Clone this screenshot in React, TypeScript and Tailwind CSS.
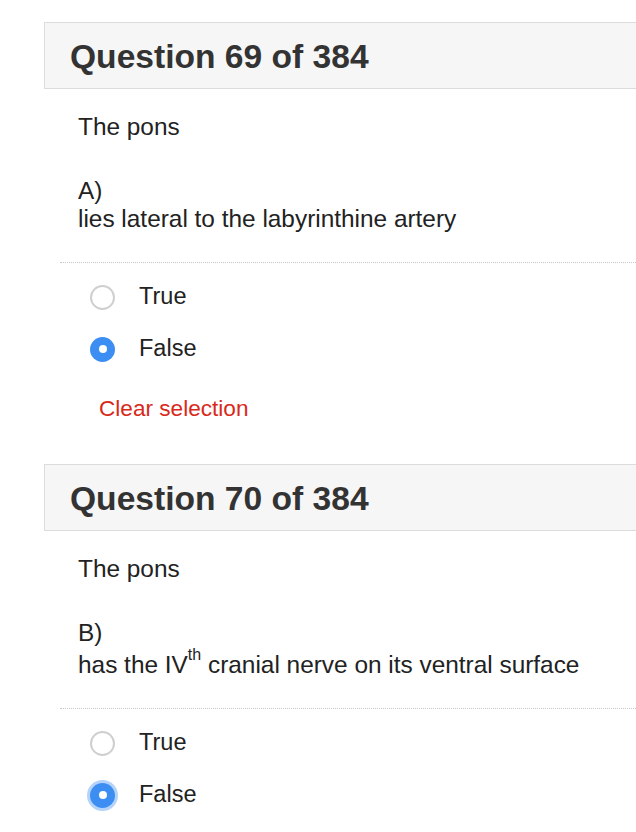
import React from 'react';

type Question = {
  number: number;
  letter: string;
  answer: React.ReactNode;
  selected: 'true' | 'false' | null;
  focused?: boolean;
  tallLine?: boolean;
};

const questions: Question[] = [
  {
    number: 69,
    letter: 'A)',
    answer: 'lies lateral to the labyrinthine artery',
    selected: 'false',
  },
  {
    number: 70,
    letter: 'B)',
    answer: (
      <>
        has the IV
        <sup className="text-[16px] top-[-0.8em]">th</sup> cranial nerve on its ventral surface
      </>
    ),
    selected: 'false',
    focused: true,
    tallLine: true,
  },
];

const Radio: React.FC<{ checked: boolean; focused?: boolean; label: string }> = ({
  checked,
  focused,
  label,
}) => (
  <label className="flex items-center h-[52px] ml-[46px]">
    {checked ? (
      <span
        className={
          'w-[25px] h-[25px] rounded-full bg-[#3d8ef2] flex items-center justify-center ' +
          (focused ? 'ring-[3px] ring-[#b5d3f8]' : '')
        }
      >
        <span className="w-[8px] h-[8px] rounded-full bg-white" />
      </span>
    ) : (
      <span className="w-[25px] h-[25px] rounded-full border-2 border-[#cfcfcf] bg-white" />
    )}
    <span className="ml-[24px] text-[23.5px] text-[#222]">{label}</span>
  </label>
);

export default function App() {
  return (
    <div className="w-[636px] h-[832px] overflow-hidden bg-white pl-[44px] pt-[22px] font-['Liberation_Sans',Arial,sans-serif]">
      {questions.map((q, i) => (
        <section key={q.number} className={i > 0 ? 'mt-[41px]' : ''}>
          {/* Header */}
          <div className="w-[620px] h-[67px] border border-[#dcdcdc] bg-[#f6f6f6] flex items-center pl-[25px] pt-[2px]">
            <h2 className="text-[33.6px] font-bold text-[#333] leading-none">
              Question {q.number} of 384
            </h2>
          </div>

          {/* Question text */}
          <div className="pl-[34px] text-[24.4px] leading-[28px] text-[#222]">
            <p className="mt-[24px]">The pons</p>
            <p className="mt-[36px]">{q.letter}</p>
            <p className={q.tallLine ? 'pt-[4px]' : ''}>{q.answer}</p>
          </div>

          <div className="ml-[16px] mt-[29px] border-t border-dotted border-[#c8c8c8]" />

          {/* Options */}
          <div className="pt-[8px]">
            <Radio checked={q.selected === 'true'} label="True" />
            <Radio checked={q.selected === 'false'} focused={q.focused} label="False" />
          </div>

          <button className="ml-[55px] mt-[20px] text-[22.6px] leading-[28px] text-[#d8291a]">
            Clear selection
          </button>
        </section>
      ))}
    </div>
  );
}
